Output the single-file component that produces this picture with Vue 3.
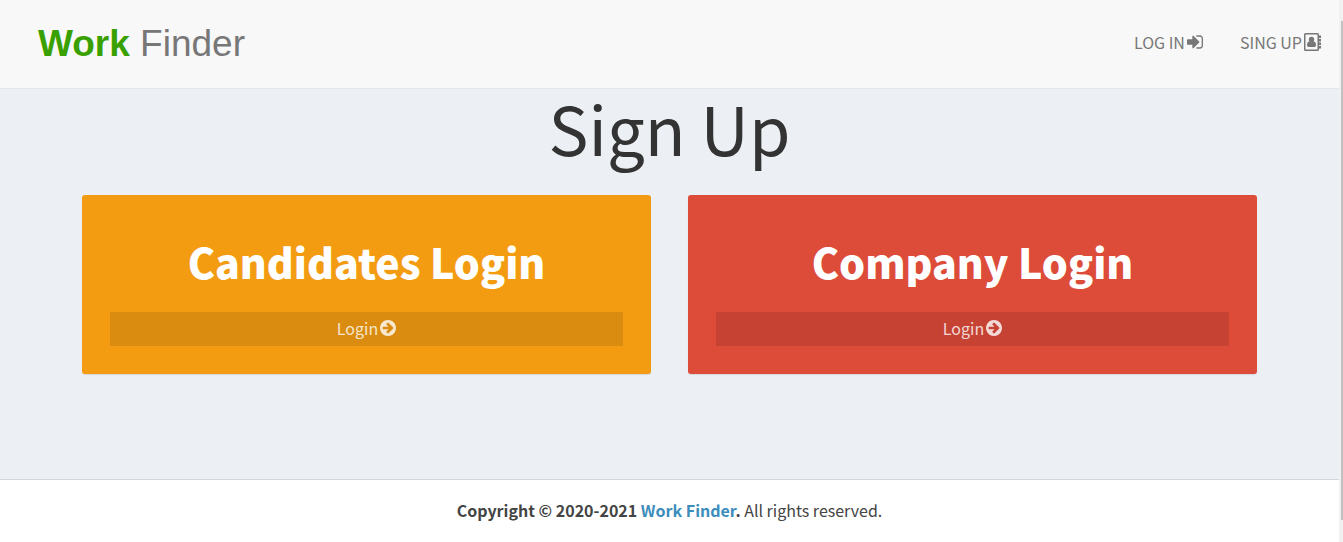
<script setup>
const cards = [
  { title: 'Candidates Login', tone: 'amber' },
  { title: 'Company Login', tone: 'red' },
]
</script>

<template>
  <div class="frame">
    <div class="page">
      <header class="topbar">
        <a class="brand" href="#"><b>Work</b> Finder</a>
        <nav class="links">
          <a href="#">
            <span>LOG IN</span>
            <svg class="icon" viewBox="128 128 1536 1536" aria-hidden="true">
              <path d="M1312 896q0 26-19 45l-544 544q-19 19-45 19t-45-19-19-45v-288h-448q-26 0-45-19t-19-45v-384q0-26 19-45t45-19h448v-288q0-26 19-45t45-19 45 19l544 544q19 19 19 45zm352-352v704q0 119-84.500 203.500t-203.500 84.500h-320q-13 0-22.500-9.500t-9.500-22.500q0-4-1-20t-.5-26.500 3-23.500 10-19.500 20.500-6.500h320q66 0 113-47t47-113v-704q0-66-47-113t-113-47h-312l-11.500-1-11.500-3-8-5.500-7-9-2-13.500q0-4-1-20t-.5-26.500 3-23.500 10-19.500 20.500-6.500h320q119 0 203.500 84.500t84.500 203.500z" />
            </svg>
          </a>
          <a href="#">
            <span>SING UP</span>
            <svg class="icon book" viewBox="0 0 17 18" aria-hidden="true">
              <path fill-rule="evenodd" d="M1.500 0h12A1.500 1.500 0 0 1 15 1.500v15a1.500 1.500 0 0 1-1.500 1.500h-12A1.500 1.500 0 0 1 0 16.500v-15A1.500 1.500 0 0 1 1.500 0zM1.500 1.500v15h12v-15z" />
              <circle cx="7.500" cy="6.400" r="2.700" />
              <path d="M5.300 8.200Q7.500 10.300 9.700 8.200Q12 8.600 12 12.200Q12 14 10.400 14H4.600Q3 14 3 12.200Q3 8.600 5.300 8.200z" />
              <path d="M15 2.500H17v2.500h-2zM15 6H17v2.500h-2zM15 9.500H17V12h-2zM15 13H17v2.500h-2z" />
            </svg>
          </a>
        </nav>
      </header>

      <main class="content">
        <h1>Sign Up</h1>
        <div class="cards">
          <section v-for="card in cards" :key="card.title" class="card" :class="card.tone">
            <h2>{{ card.title }}</h2>
            <a class="enter" href="#">
              <span>Login</span>
              <svg class="icon" viewBox="128 128 1536 1536" aria-hidden="true">
                <path d="M1413 896q0-27-18-45l-91-91-362-362q-18-18-45-18t-45 18l-91 91q-18 18-18 45t18 45l189 189h-502q-26 0-45 19t-19 45v128q0 26 19 45t45 19h502l-189 189q-18 18-18 45t18 45l91 91q18 18 45 18t45-18l362-362 91-91q18-18 18-45zm251 0q0 209-103 385.500t-279.500 279.500-385.500 103-385.500-103-279.500-279.500-103-385.500 103-385.500 279.500-279.500 385.500-103 385.500 103 279.500 279.500 103 385.500z" />
              </svg>
            </a>
          </section>
        </div>
      </main>

      <footer class="footer">
        <strong>Copyright © 2020-2021 <a href="#">Work Finder</a>.</strong> All rights reserved.
      </footer>
    </div>
    <div class="track" aria-hidden="true"><div class="thumb"></div></div>
  </div>
</template>

<style>
body {
  margin: 0;
}
</style>

<style scoped>
.frame {
  display: flex;
  min-height: 100vh;
  font-family: "Noto Sans CJK JP", "Noto Sans", sans-serif;
  font-size: 16px;
  line-height: 24px;
  color: #444;
}
.page {
  flex: 1;
  display: flex;
  flex-direction: column;
  background: #ecf0f5;
}
a {
  text-decoration: none;
}
.topbar {
  display: flex;
  align-items: center;
  justify-content: space-between;
  padding: 18px 18px 18px 38px;
  background: #f8f8f8;
  border-bottom: 1px solid #e7e7e7;
}
.brand {
  font: 37px/52px "Liberation Sans", Arial, sans-serif;
  color: #777;
}
.brand b {
  color: #39a000;
}
.links {
  display: flex;
  gap: 37px;
  padding-bottom: 4px;
}
.links a,
.enter {
  display: flex;
  align-items: center;
  gap: 2px;
}
.links a {
  color: #777;
}
.icon {
  width: 16px;
  height: 16px;
  fill: currentColor;
}
.book {
  width: 17px;
  height: 18px;
}
.content {
  flex: 1;
  padding: 0 82px;
}
h1 {
  margin: 0;
  padding-bottom: 30px;
  font-size: 67px;
  line-height: 76px;
  font-weight: 400;
  text-align: center;
  color: #333;
}
.cards {
  display: grid;
  grid-template-columns: 1fr 1fr;
  gap: 37px;
}
.card {
  padding: 28px;
  border-radius: 3px;
  box-shadow: 0 1px 1px rgba(0, 0, 0, 0.1);
  color: #fff;
}
.amber {
  background: #f39c12;
}
.red {
  background: #dd4b39;
}
h2 {
  margin: 0 0 21px;
  padding-top: 8px;
  font-size: 41px;
  line-height: 60px;
  font-weight: 900;
  text-align: center;
}
.enter {
  justify-content: center;
  padding: 4px 0 6px;
  background: rgba(0, 0, 0, 0.1);
  color: rgba(255, 255, 255, 0.8);
}
.footer {
  padding: 18px 20px 20px;
  border-top: 1px solid #d2d6de;
  background: #fff;
  text-align: center;
}
.footer a {
  color: #3c8dbc;
}
.track {
  box-sizing: border-box;
  width: 4px;
  padding: 21px 0 22px 2px;
  display: flex;
  background: #f1f1f1;
}
.thumb {
  flex: 1;
  background: #c1c1c1;
}
</style>
